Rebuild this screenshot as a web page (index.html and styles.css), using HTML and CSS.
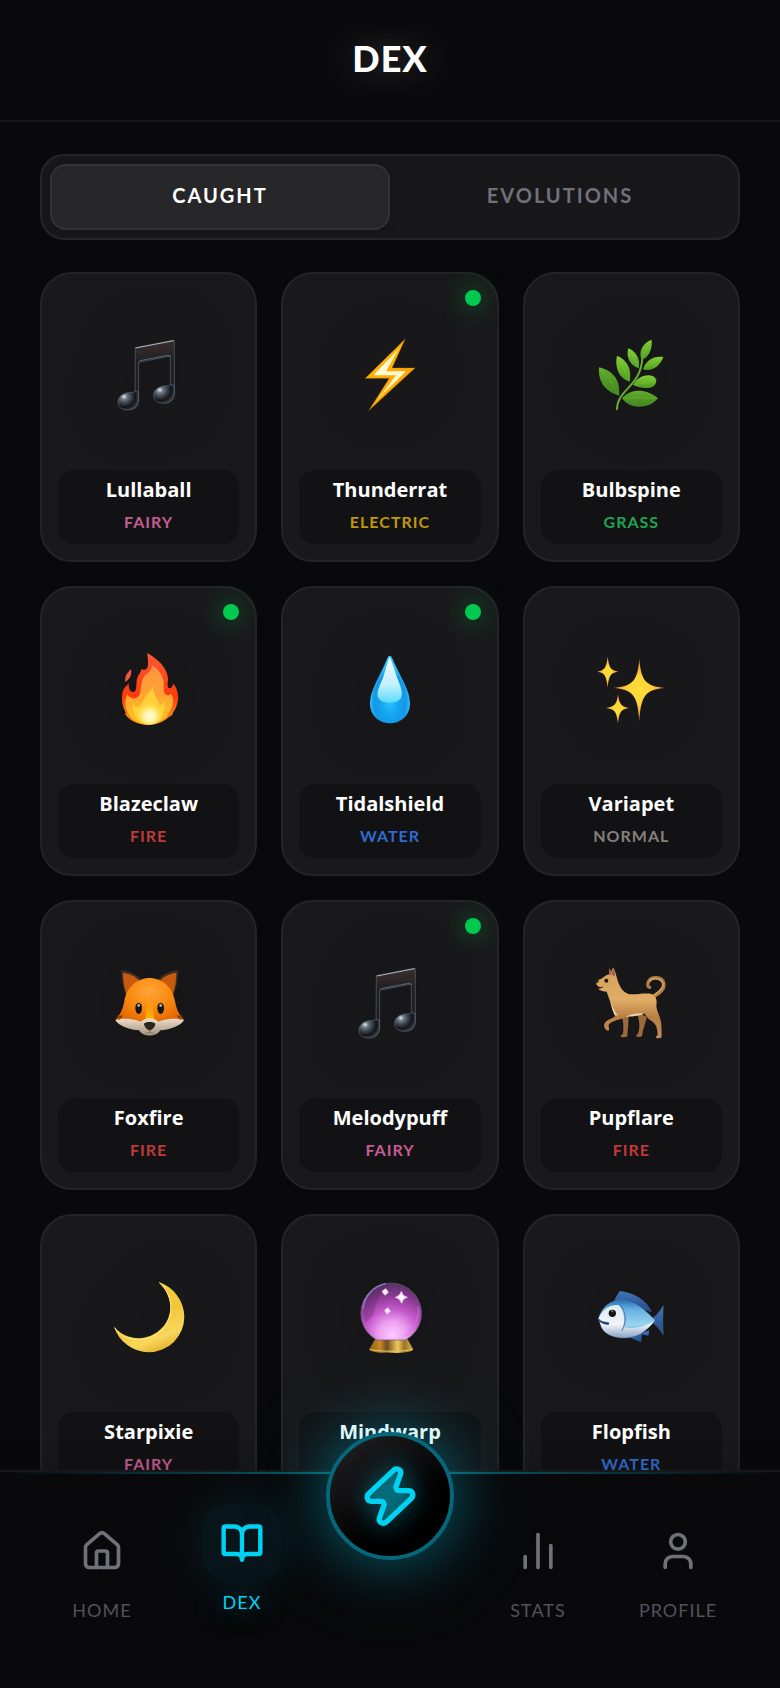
FILE: index.html
```html
<!DOCTYPE html>
<html lang="en">
<head>
  <meta charset="UTF-8" />
  <meta name="viewport" content="width=device-width, initial-scale=1.0"/>
  <title>Dex</title>
  <link rel="stylesheet" href="styles.css">
</head>
<body>
  <!-- shared gradients and the note art (used twice) -->
  <svg class="defs" width="0" height="0" aria-hidden="true">
    <defs>
      <linearGradient id="note" x1="0" y1="0" x2="0" y2="1">
        <stop offset="0" stop-color="#3a2e2e"/><stop offset=".35" stop-color="#241f21"/><stop offset="1" stop-color="#1b1e23"/>
      </linearGradient>
      <radialGradient id="noteHead" cx=".3" cy=".3" r=".75">
        <stop offset="0" stop-color="#e4ebf0"/><stop offset=".2" stop-color="#6d7a85"/><stop offset=".5" stop-color="#343c45"/><stop offset=".75" stop-color="#151314"/><stop offset="1" stop-color="#39424b"/>
      </radialGradient>
      <linearGradient id="boltIn" x1="0" y1="0" x2="0" y2="1">
        <stop offset="0" stop-color="#ffe76a"/><stop offset=".35" stop-color="#fffbd8"/><stop offset=".6" stop-color="#fff9c4"/><stop offset="1" stop-color="#ffd52e"/>
      </linearGradient>
      <linearGradient id="boltOut" x1="0" y1="0" x2="1" y2="1">
        <stop offset="0" stop-color="#ffbe12"/><stop offset="1" stop-color="#ff9500"/>
      </linearGradient>
      <linearGradient id="leaf" x1="0" y1="0" x2="0" y2="1">
        <stop offset="0" stop-color="#82cf36"/><stop offset="1" stop-color="#4f9c22"/>
      </linearGradient>
      <linearGradient id="leafDark" x1="0" y1="0" x2="0" y2="1">
        <stop offset="0" stop-color="#62ac2c"/><stop offset="1" stop-color="#3f8420"/>
      </linearGradient>
      <linearGradient id="fireOut" x1="0" y1="0" x2="0" y2="1">
        <stop offset="0" stop-color="#ff5a36"/><stop offset=".6" stop-color="#fb3a0c"/><stop offset="1" stop-color="#ff9d1c"/>
      </linearGradient>
      <linearGradient id="fireMid" x1="0" y1="0" x2="0" y2="1">
        <stop offset="0" stop-color="#ff9442"/><stop offset=".5" stop-color="#ffa233"/><stop offset="1" stop-color="#ffc91f"/>
      </linearGradient>
      <radialGradient id="fireIn" cx=".5" cy=".7" r=".5">
        <stop offset="0" stop-color="#fffde6"/><stop offset=".4" stop-color="#fff3a0"/><stop offset="1" stop-color="#ffd83a" stop-opacity="0"/>
      </radialGradient>
      <radialGradient id="drop" cx=".5" cy=".68" r=".5">
        <stop offset="0" stop-color="#2cc4ff"/><stop offset=".45" stop-color="#14a4ef"/><stop offset=".8" stop-color="#1297e6"/><stop offset="1" stop-color="#35c0fa"/>
      </radialGradient>
      <linearGradient id="dropIn" x1="0" y1="0" x2="0" y2="1">
        <stop offset="0" stop-color="#f4fdff"/><stop offset=".6" stop-color="#c3f1ff"/><stop offset="1" stop-color="#5cd9ff"/>
      </linearGradient>
      <radialGradient id="spark">
        <stop offset="0" stop-color="#ffdf33"/><stop offset=".4" stop-color="#ffd43a"/><stop offset=".75" stop-color="#f5a93c"/><stop offset="1" stop-color="#a8622e"/>
      </radialGradient>
      <radialGradient id="fox" cx=".5" cy=".25" r=".75">
        <stop offset="0" stop-color="#ffa53a"/><stop offset=".4" stop-color="#fb8c10"/><stop offset=".75" stop-color="#e86f06"/><stop offset="1" stop-color="#d25e06"/>
      </radialGradient>
      <linearGradient id="foxJaw" x1="0" y1="0" x2="0" y2="1">
        <stop offset="0" stop-color="#efe0cd"/><stop offset="1" stop-color="#a18f7c"/>
      </linearGradient>
      <linearGradient id="foxNose" x1="0" y1="0" x2="0" y2="1">
        <stop offset="0" stop-color="#ffa800" stop-opacity="0"/><stop offset="1" stop-color="#ffc400"/>
      </linearGradient>
      <linearGradient id="dog" x1="0" y1="0" x2="0" y2="1">
        <stop offset="0" stop-color="#d39f59"/><stop offset=".45" stop-color="#e0ae67"/><stop offset=".7" stop-color="#b98044"/><stop offset="1" stop-color="#c08a5c"/>
      </linearGradient>
      <linearGradient id="moon" x1=".3" y1="0" x2=".7" y2="1">
        <stop offset="0" stop-color="#f7cf45"/><stop offset=".5" stop-color="#f2c63a"/><stop offset=".8" stop-color="#f8d75c"/><stop offset="1" stop-color="#e3ac25"/>
      </linearGradient>
      <radialGradient id="orb" cx=".52" cy=".9" r=".9">
        <stop offset="0" stop-color="#ffc9ff"/><stop offset=".25" stop-color="#eda0f1"/><stop offset=".5" stop-color="#c257cb"/><stop offset=".75" stop-color="#8b3b92"/><stop offset="1" stop-color="#553263"/>
      </radialGradient>
      <linearGradient id="orbBase" x1="0" y1="0" x2="1" y2="0">
        <stop offset="0" stop-color="#8c5d17"/><stop offset=".25" stop-color="#c98a28"/><stop offset=".4" stop-color="#6d4c22"/><stop offset=".65" stop-color="#f0cb58"/><stop offset=".8" stop-color="#9a7428"/><stop offset="1" stop-color="#d9b040"/>
      </linearGradient>
      <linearGradient id="fish" x1="0" y1="0" x2="0" y2="1">
        <stop offset="0" stop-color="#2d6fb5"/><stop offset=".25" stop-color="#66b0e2"/><stop offset=".65" stop-color="#9ad4f2"/><stop offset="1" stop-color="#5c93c2"/>
      </linearGradient>
      <linearGradient id="fin" x1="0" y1="0" x2="0" y2="1">
        <stop offset="0" stop-color="#3d77b8"/><stop offset="1" stop-color="#254a86"/>
      </linearGradient>
      <linearGradient id="fishBelly" x1="0" y1="0" x2="0" y2="1">
        <stop offset="0" stop-color="#dcecf5"/><stop offset=".6" stop-color="#f1f4f7"/><stop offset="1" stop-color="#8aa3c4"/>
      </linearGradient>
    </defs>
    <symbol id="notes" viewBox="0 0 216 216">
      <path d="M67 26 L180 4 Q184 3 184 7 V166 H172 V51 L77 70 V187 H66 Z" fill="url(#note)" stroke="#566675" stroke-width="2"/>
      <path d="M68 27 L182 5" stroke="#a9b5bd" stroke-width="3"/>
      <path d="M78 69 Q78 66 82 65 L164 49 Q171 48 172 54" fill="none" stroke="#4e6a83" stroke-width="3"/>
      <path d="M76 160 V187 C76 204 62 213 44 213 C27 213 15 204 15 190 C15 172 30 162 48 161 C60 161 66 159 69 156 Z" fill="url(#noteHead)" stroke="#586878" stroke-width="2"/>
      <path d="M184 140 V166 C184 183 170 193 152 193 C134 193 122 184 122 169 C122 152 137 142 156 141 C166 141 172 139 176 136 Z" fill="url(#noteHead)" stroke="#586878" stroke-width="2"/>
    </symbol>
  </svg>

  <div class="app">
    <header class="header">
      <h1>DEX</h1>
    </header>

    <main class="content">
      <div class="tabs" role="tablist">
        <button type="button" role="tab" aria-selected="true" class="tab active">CAUGHT</button>
        <button type="button" role="tab" aria-selected="false" class="tab">EVOLUTIONS</button>
      </div>

      <div class="dex-grid">
        <article class="card">
          <div class="sprite"><svg viewBox="0 0 216 216"><use href="#notes"/></svg></div>
          <div class="info"><h2 class="name">Lullaball</h2><p class="type fairy">FAIRY</p></div>
        </article>

        <article class="card">
          <span class="dot"></span>
          <div class="sprite"><svg viewBox="0 0 216 216">
            <path d="M153 1 L34 118 H106 L45 214 L183 87 H114 Z" fill="url(#boltOut)" stroke="#c98410" stroke-width="1"/>
            <path d="M138 25 L58 109 H126 L64 189 L156 97 H96 Z" fill="url(#boltIn)"/>
          </svg></div>
          <div class="info"><h2 class="name">Thunderrat</h2><p class="type electric">ELECTRIC</p></div>
        </article>

        <article class="card">
          <div class="sprite"><svg viewBox="0 0 216 216">
            <path d="M66 211 C66 150 138 145 142 56" fill="none" stroke="#67a836" stroke-width="6" stroke-linecap="round"/>
            <path d="M12 85 C44 92 78 115 72 170 C38 160 8 135 12 85Z" fill="url(#leafDark)"/>
            <path d="M81 178 C105 148 155 148 189 178 C160 212 105 212 81 178Z" fill="url(#leafDark)"/>
            <path d="M66 50 C92 60 112 85 104 128 C72 118 58 85 66 50Z" fill="url(#leaf)"/>
            <path d="M100 28 C122 37 137 58 131 88 C105 80 92 55 100 28Z" fill="url(#leaf)"/>
            <path d="M170 2 C146 10 128 35 140 63 C160 54 173 34 170 2Z" fill="url(#leaf)"/>
            <path d="M205 54 C175 50 152 65 144 91 C170 98 193 85 205 54Z" fill="url(#leaf)"/>
            <path d="M114 138 C130 105 175 100 184 122 C185 152 145 152 114 138Z" fill="url(#leaf)"/>
            <path d="M15 88 Q45 120 71 168 M68 53 Q88 85 103 126 M102 31 Q118 58 130 86 M168 6 Q150 30 141 61 M202 56 Q170 70 146 90 M117 137 Q150 132 182 123 M84 178 Q130 174 186 178" fill="none" stroke="#8fd54a" stroke-width="2" opacity=".4"/>
          </svg></div>
          <div class="info"><h2 class="name">Bulbspine</h2><p class="type grass">GRASS</p></div>
        </article>

        <article class="card">
          <span class="dot"></span>
          <div class="sprite"><svg viewBox="0 0 216 216">
            <path d="M54 48 C56 66 54 74 37 87 C34 70 42 60 54 48Z" fill="#f4553d"/>
            <path d="M103 0 C140 22 166 50 165 80 C163 95 163 106 170 106 C177 106 180 98 180 91 C193 105 199 130 193 150 C190 165 184 172 179 181 L178 186 L169 191 C150 208 125 216 104 216 C80 216 55 205 41 190 L35 181 L39 180 C26 160 24 130 30 114 C35 101 44 97 47 91 C47 105 50 117 60 117 C73 117 69 95 71 84 C74 65 83 62 85 49 C96 53 105 48 105 36 C106 20 103 8 103 0Z" fill="url(#fireOut)"/>
            <path d="M117 36 C150 60 154 80 152 105 C152 125 162 132 174 122 C188 140 178 168 160 192 C140 208 118 214 104 214 C84 214 62 204 50 188 C34 165 34 142 43 124 C52 142 78 140 82 118 C86 92 84 80 100 64 C111 56 118 48 117 36Z" fill="url(#fireMid)"/>
            <path d="M120 102 C120 126 134 136 140 158 C146 152 150 152 156 144 C160 178 136 212 107 214 C76 212 56 186 60 148 C66 162 72 160 78 164 C92 142 98 126 120 102Z" fill="#ffd83a" opacity=".8"/>
            <ellipse cx="110" cy="172" rx="44" ry="43" fill="url(#fireIn)"/>
          </svg></div>
          <div class="info"><h2 class="name">Blazeclaw</h2><p class="type fire">FIRE</p></div>
        </article>

        <article class="card">
          <span class="dot"></span>
          <div class="sprite"><svg viewBox="0 0 216 216">
            <path d="M107 8 C113 8 116 18 122 32 C140 72 168 112 168 151 C168 186 142 211 108 211 C74 211 48 186 48 151 C48 112 76 72 93 32 C99 18 102 8 107 8Z" fill="url(#drop)"/>
            <path d="M107 12 C113 22 124 60 134 86 C142 105 145 120 143 130 C139 144 125 149 107 149 C89 149 75 144 71 130 C69 116 76 100 84 82 C94 58 101 22 107 12Z" fill="url(#dropIn)"/>
          </svg></div>
          <div class="info"><h2 class="name">Tidalshield</h2><p class="type water">WATER</p></div>
        </article>

        <article class="card">
          <div class="sprite"><svg viewBox="0 0 216 216">
            <path d="M133 16 C138 82 150 100 211 105 C150 110 138 128 133 206 C128 128 116 110 54 105 C116 100 128 82 133 16Z" fill="url(#spark)"/>
            <path d="M38 10 C42 45 47 53 71 56 C47 59 42 66 38 105 C34 66 29 59 6 56 C29 53 34 45 38 10Z" fill="url(#spark)"/>
            <path d="M69 123 C73 154 79 162 104 165 C79 168 73 175 69 212 C65 175 59 168 31 165 C59 162 65 154 69 123Z" fill="url(#spark)"/>
          </svg></div>
          <div class="info"><h2 class="name">Variapet</h2><p class="type normal">NORMAL</p></div>
        </article>

        <article class="card">
          <div class="sprite"><svg viewBox="0 0 216 216">
            <path d="M24 9 C48 11 70 22 84 37 L40 90 C30 66 25 40 24 9Z M196 9 C172 11 150 22 136 37 L180 90 C190 66 195 40 196 9Z" fill="#3b2f25"/>
            <path d="M30 17 C50 20 68 28 78 40 L42 84 C34 64 30 42 30 17Z M190 17 C170 20 152 28 142 40 L178 84 C186 64 190 42 190 17Z" fill="#c9590f"/>
            <path d="M7 159 C24 142 30 124 34 103 C40 62 72 33 110 33 C148 33 180 62 186 103 C190 124 196 142 213 159 C200 176 160 190 110 190 C60 190 20 176 7 159Z" fill="url(#fox)"/>
            <path d="M103 100 C105 90 115 90 117 100 L124 165 H96Z" fill="url(#foxNose)"/>
            <path d="M7 159 C40 150 72 160 84 164 C94 150 126 150 136 164 C148 160 180 150 213 159 C204 176 172 188 142 190 C130 211 90 211 78 190 C48 188 16 176 7 159Z" fill="url(#foxJaw)"/>
            <path d="M16 142 L10 154 L27 146 L18 158 M204 142 L210 154 L193 146 L202 158" fill="none" stroke="#6e2b0a" stroke-width="3"/>
            <ellipse cx="77" cy="124" rx="10" ry="17" fill="#151515"/><ellipse cx="143" cy="124" rx="10" ry="17" fill="#151515"/>
            <ellipse cx="77" cy="115" rx="4" ry="5" fill="#b5b0aa"/><ellipse cx="143" cy="115" rx="4" ry="5" fill="#b5b0aa"/>
            <path d="M93 170 C98 163 122 163 127 170 C127 179 116 190 110 190 C104 190 93 179 93 170Z" fill="#292622"/>
            <path d="M110 188 V195 M98 199 Q110 192 122 199" fill="none" stroke="#75685b" stroke-width="2"/>
          </svg></div>
          <div class="info"><h2 class="name">Foxfire</h2><p class="type fire">FIRE</p></div>
        </article>

        <article class="card">
          <span class="dot"></span>
          <div class="sprite"><svg viewBox="0 0 216 216"><use href="#notes"/></svg></div>
          <div class="info"><h2 class="name">Melodypuff</h2><p class="type fairy">FAIRY</p></div>
        </article>

        <article class="card">
          <div class="sprite"><svg viewBox="0 0 216 216">
            <path d="M127 135 C131 160 136 172 131 194 C130 200 123 203 123 208 Q130 212 141 208 C143 190 150 172 156 150Z M80 148 C86 165 86 180 84 200 Q76 205 77 209 Q86 213 97 208 C98 185 102 165 100 145Z" fill="#9c6a3a"/>
            <path d="M174 90 C196 78 211 64 206 47 C200 29 170 27 161 43 C156 53 158 60 164 61" fill="none" stroke="#b07c42" stroke-width="10" stroke-linecap="round"/>
            <path d="M178 83 C196 72 207 62 203 48 C197 33 172 30 163 44" fill="none" stroke="#d6a45e" stroke-width="5" stroke-linecap="round"/>
            <path d="M42 22 L43 4 L49 14 L54 1 C61 12 63 23 66 34 C72 54 80 74 100 81 C124 84 148 76 170 81 C184 86 187 102 184 118 C186 136 198 152 199 174 L200 207 Q200 215 192 214 L182 213 Q182 208 188 204 C188 186 184 172 170 162 C158 156 152 145 148 139 C126 145 108 148 92 150 C76 158 54 160 43 171 C38 176 44 184 42 190 C34 193 27 182 27 173 C32 158 50 156 62 147 C50 128 46 98 35 74 C27 73 16 72 10 66 L22 62 C14 61 6 58 4 52 C3 43 6 39 12 38 C22 36 28 26 42 22Z" fill="url(#dog)"/>
            <path d="M35 74 C40 90 54 128 68 144 L60 146 C50 128 46 98 35 74Z M92 149 C110 140 130 138 148 139 C140 146 110 150 92 149Z" fill="#ecd2a0"/>
            <path d="M43 6 L42 23 L48 24 L49 15Z M54 3 L50 24 L60 27 C60 18 58 10 54 3Z" fill="#a25b51"/>
            <path d="M7 60 Q16 64 24 60" fill="none" stroke="#3b2415" stroke-width="3"/>
            <circle cx="34" cy="41" r="6" fill="#1d1511"/><ellipse cx="6" cy="43" rx="5" ry="4" fill="#1d1b1c"/>
          </svg></div>
          <div class="info"><h2 class="name">Pupflare</h2><p class="type fire">FIRE</p></div>
        </article>

        <article class="card">
          <div class="sprite"><svg viewBox="0 0 216 216">
            <path d="M137 3 A112 112 0 0 1 214 107 A107 107 0 0 1 107 214 A112 112 0 0 1 3 137 A96 96 0 0 0 170 98 C177 66 166 30 137 3Z" fill="url(#moon)"/>
            <path d="M5 140 C30 176 70 180 104 172 C146 160 172 126 174 82 C174 50 160 24 139 5" fill="none" stroke="#ffea7a" stroke-width="3"/>
          </svg></div>
          <div class="info"><h2 class="name">Starpixie</h2><p class="type fairy">FAIRY</p></div>
        </article>

        <article class="card">
          <div class="sprite"><svg viewBox="0 0 216 216">
            <path d="M63 175 H161 L177 204 Q176 216 112 216 Q47 216 46 204Z" fill="url(#orbBase)"/>
            <path d="M47 206 Q112 216 176 206" fill="none" stroke="#e8c765" stroke-width="3"/>
            <path d="M68 177 A91 91 0 1 1 155 177Z" fill="url(#orb)" stroke="#6b5a79" stroke-width="2"/>
            <path d="M34 60 C52 24 80 12 104 10 C84 30 62 60 60 100 C52 110 40 120 34 124 C28 104 28 80 34 60Z" fill="#4a1d4f" opacity=".25"/>
            <path d="M27 84 C30 44 60 14 96 8" fill="none" stroke="#9f9ae8" stroke-width="5" opacity=".6"/>
            <path d="M192 76 C196 112 180 146 154 164" fill="none" stroke="#d678dd" stroke-width="7" opacity=".4"/>
            <path d="M142 31 Q145 46 160 49 Q146 52 143 67 Q139 53 124 49 Q139 45 142 31Z M95 23 L103 34 L93 43 L84 31Z M102 80 L109 91 L99 99 L92 88Z" fill="#fff1ff" stroke="#fbd3ff" stroke-width="2"/>
          </svg></div>
          <div class="info"><h2 class="name">Mindwarp</h2><p class="type psychic">PSYCHIC</p></div>
        </article>

        <article class="card">
          <div class="sprite"><svg viewBox="0 0 216 216">
            <path d="M170 112 C184 106 194 90 205 74 C203 104 203 132 205 162 C194 146 184 132 170 124Z" fill="url(#fin)" stroke="#5b7ba6" stroke-width="1"/>
            <path d="M58 58 L74 31 C112 34 154 56 169 92Z" fill="url(#fin)" stroke="#5b7ba6" stroke-width="1"/>
            <path d="M100 168 L139 184 L140 160 L160 164 L163 148Z" fill="url(#fin)"/>
            <path d="M10 114 C20 78 46 57 78 57 C116 57 152 86 180 118 C156 150 126 170 90 171 C54 172 22 156 17 132 L22 126Z" fill="url(#fish)" stroke="#5579a6" stroke-width="1"/>
            <path d="M10 114 C20 90 40 70 70 72 C88 84 90 118 84 138 C112 146 150 138 178 120 C156 150 126 169 90 170 C54 171 24 156 18 134Z" fill="url(#fishBelly)"/>
            <path d="M75 73 C94 92 96 122 80 150" fill="none" stroke="#49749f" stroke-width="3"/>
            <path d="M10 112 C18 122 30 123 43 125 L41 131 C28 133 16 126 10 118Z" fill="#1e3f78"/>
            <circle cx="52" cy="97" r="11" fill="#15120f"/><circle cx="52" cy="91" r="3" fill="#817c78"/>
          </svg></div>
          <div class="info"><h2 class="name">Flopfish</h2><p class="type water">WATER</p></div>
        </article>
      </div>
    </main>

    <nav class="nav">
      <a href="#home" class="nav-item">
        <span class="nav-icon"><svg viewBox="0 0 24 24"><path d="M15 21v-8a1 1 0 0 0-1-1h-4a1 1 0 0 0-1 1v8"/><path d="M3 10a2 2 0 0 1 .709-1.528l7-5.999a2 2 0 0 1 2.582 0l7 5.999A2 2 0 0 1 21 10v9a2 2 0 0 1-2 2H5a2 2 0 0 1-2-2z"/></svg></span>
        <span class="nav-label">HOME</span>
      </a>
      <a href="#dex" class="nav-item active" aria-current="page">
        <span class="nav-icon"><svg viewBox="0 0 24 24"><path d="M12 7v14"/><path d="M3 18a1 1 0 0 1-1-1V4a1 1 0 0 1 1-1h5a4 4 0 0 1 4 4 4 4 0 0 1 4-4h5a1 1 0 0 1 1 1v13a1 1 0 0 1-1 1h-6a3 3 0 0 0-3 3 3 3 0 0 0-3-3z"/></svg></span>
        <span class="nav-label">DEX</span>
      </a>
      <div class="nav-center">
        <button type="button" class="battle" aria-label="Battle">
          <svg viewBox="0 0 24 24"><path d="M13.3 2.4L4 11.1C3 12.2 3.4 13.9 5 14h3.5c1 0 1.5.7 1.2 1.6L8 20.3c-.4 1.5 1.6 2.5 2.7 1.4L20 12.9c1-1.1.6-2.8-1-2.9h-3.5c-1 0-1.5-.7-1.2-1.6L16 3.7c.4-1.5-1.6-2.5-2.7-1.3z"/></svg>
        </button>
      </div>
      <a href="#stats" class="nav-item">
        <span class="nav-icon"><svg viewBox="0 0 24 24"><path d="M5 21v-6M12 21V3M19 21V9"/></svg></span>
        <span class="nav-label">STATS</span>
      </a>
      <a href="#profile" class="nav-item">
        <span class="nav-icon"><svg viewBox="0 0 24 24"><path d="M19 21v-2a4 4 0 0 0-4-4H9a4 4 0 0 0-4 4v2"/><circle cx="12" cy="7" r="4"/></svg></span>
        <span class="nav-label">PROFILE</span>
      </a>
    </nav>
  </div>
</body>
</html>
```
FILE: styles.css
```css
* {
  box-sizing: border-box;
  margin: 0;
  padding: 0;
}
body {
  font-family: "Lato", sans-serif;
  background-color: #09090b;
  color: #fff;
}
button {
  font-family: inherit;
  cursor: pointer;
}
.defs {
  position: absolute;
}
.app {
  display: flex;
  flex-direction: column;
  height: 100vh;
}

/* header */
.header {
  flex: none;
  padding: 34px 40px 38px;
  border-bottom: 2px solid #151517;
  text-align: center;
}
.header h1 {
  font-size: 36px;
  line-height: 48px;
  font-weight: 900;
  letter-spacing: 1px;
  text-shadow: 0 0 40px rgba(255, 255, 255, 0.3);
}

/* scrolling content */
.content {
  flex: 1;
  min-height: 0;
  overflow-y: auto;
  scrollbar-width: none;
  padding: 32px 40px;
}
.tabs {
  display: flex;
  padding: 8px;
  margin-bottom: 32px;
  background-color: #18181a;
  border: 2px solid #262628;
  border-radius: 24px;
}
.tab {
  flex: 1;
  padding: 16px 16px 20px;
  font-size: 20px;
  line-height: 26px;
  font-weight: 700;
  letter-spacing: 2px;
  color: #71717b;
  background: none;
  border: 2px solid transparent;
  border-radius: 16px;
}
.tab.active {
  color: #fff;
  background-color: #272729;
  border-color: #333335;
  box-shadow: 0 4px 12px rgba(0, 0, 0, 0.1);
}

.dex-grid {
  display: grid;
  grid-template-columns: repeat(3, 1fr);
  gap: 24px;
}
.card {
  position: relative;
  display: flex;
  flex-direction: column;
  gap: 10px;
  padding: 16px;
  background-color: #19191b;
  border: 2px solid #242426;
  border-radius: 32px;
}
.dot {
  position: absolute;
  top: 16px;
  right: 16px;
  width: 16px;
  height: 16px;
  border-radius: 50%;
  background-color: #00c950;
  box-shadow: 0 0 24px rgba(0, 201, 80, 0.6);
}
.sprite {
  display: flex;
  align-items: center;
  justify-content: center;
  min-height: 170px;
}
.sprite svg {
  width: 72px;
  height: 72px;
  overflow: visible;
  filter: drop-shadow(0 0 30px rgba(0, 0, 0, 0.3));
}
.info {
  padding: 7px 8px 9px;
  background-color: #121214;
  border-radius: 16px;
  text-align: center;
}
.name {
  font-family: "Open Sans", sans-serif;
  font-size: 20px;
  line-height: 26px;
  font-weight: 700;
  margin-bottom: 6px;
}
.type {
  font-size: 16px;
  line-height: 26px;
  font-weight: 700;
  letter-spacing: 1px;
}
.fairy { color: #c65c96; }
.electric { color: #c1960a; }
.grass { color: #1fa553; }
.fire { color: #c03a3a; }
.water { color: #2f6bd0; }
.normal { color: #85807c; }
.psychic { color: #a855c8; }

/* bottom navigation */
.nav {
  position: relative;
  flex: none;
  display: grid;
  grid-template-columns: 1fr 1fr 156px 1fr 1fr;
  align-items: end;
  padding: 32px 32px 66px;
  background-color: #09090b;
  border-top: 2px solid #18181a;
  box-shadow: 0 -8px 24px rgba(0, 0, 0, 0.15);
}
.nav::before {
  content: "";
  position: absolute;
  top: 0;
  left: 0;
  right: 0;
  height: 2px;
  background: linear-gradient(to right, transparent, rgba(0, 211, 242, 0.5), transparent);
}
.nav-item {
  display: flex;
  flex-direction: column;
  align-items: center;
  gap: 8px;
  color: #52525c;
  text-decoration: none;
}
.nav-icon {
  display: flex;
  padding: 17px;
  border-radius: 26px;
  color: #71717b;
}
.nav svg {
  width: 44px;
  height: 44px;
  fill: none;
  stroke: currentColor;
  stroke-width: 2;
  stroke-linecap: round;
  stroke-linejoin: round;
}
.nav-label {
  font-size: 18px;
  line-height: 24px;
  letter-spacing: 1px;
}
.nav-item.active {
  margin-bottom: 8px;
  color: #00d3f2;
}
.nav-item.active .nav-icon {
  color: #00d3f2;
  background-color: #08151b;
  box-shadow: 0 0 50px rgba(0, 211, 242, 0.12);
}
.nav-item.active .nav-label {
  text-shadow: 0 0 30px rgba(0, 211, 242, 0.5);
}
.nav-item.active svg {
  stroke-width: 2.4;
}
.nav-center {
  position: absolute;
  top: -40px;
  left: 0;
  right: 0;
  display: flex;
  justify-content: center;
  pointer-events: none;
}
.battle {
  display: flex;
  align-items: center;
  justify-content: center;
  width: 128px;
  height: 128px;
  border: 4px solid #07677a;
  border-radius: 50%;
  color: #00d3f2;
  background: linear-gradient(145deg, #232326, #000 65%);
  box-shadow: 0 0 60px rgba(0, 211, 242, 0.4), 0 0 120px rgba(0, 211, 242, 0.1);
  pointer-events: auto;
}
.nav .battle svg {
  width: 64px;
  height: 64px;
  fill: rgba(0, 211, 242, 0.3);
  filter: drop-shadow(0 0 12px rgba(0, 211, 242, 0.6));
}
.nav-item:nth-child(2) { grid-column: 2; }
.nav-item:nth-child(4) { grid-column: 4; }
.nav-item:nth-child(5) { grid-column: 5; }
```
